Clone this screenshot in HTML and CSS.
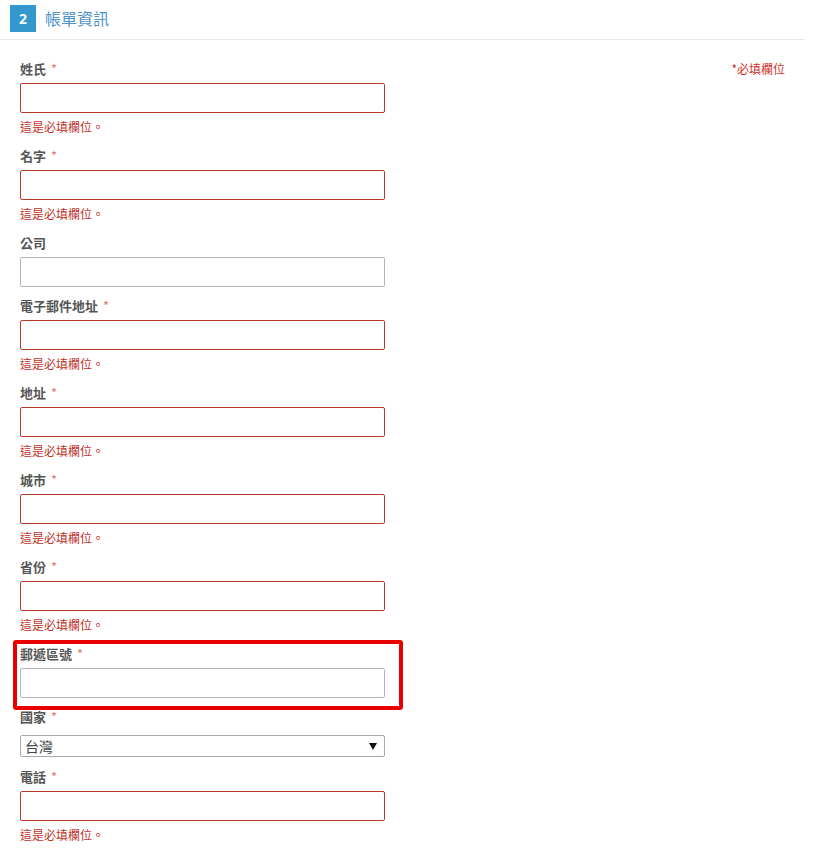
FILE: index.html
```html
<!DOCTYPE html>
<html lang="zh-Hant">
<head>
<meta charset="utf-8">
<title>帳單資訊</title>
<link rel="stylesheet" href="styles.css">
</head>
<body>
<div class="page">
  <div class="step-header">
    <span class="step-num">2</span>
    <h2 class="step-title">帳單資訊</h2>
  </div>
  <div class="form-body">
    <p class="required-note">*必填欄位</p>
    <div class="field">
      <label class="label">姓氏<em class="req">*</em></label>
      <input class="input invalid" type="text">
      <div class="error">這是必填欄位。</div>
    </div>
    <div class="field">
      <label class="label">名字<em class="req">*</em></label>
      <input class="input invalid" type="text">
      <div class="error">這是必填欄位。</div>
    </div>
    <div class="field">
      <label class="label">公司</label>
      <input class="input" type="text">
    </div>
    <div class="field">
      <label class="label">電子郵件地址<em class="req">*</em></label>
      <input class="input invalid" type="text">
      <div class="error">這是必填欄位。</div>
    </div>
    <div class="field">
      <label class="label">地址<em class="req">*</em></label>
      <input class="input invalid" type="text">
      <div class="error">這是必填欄位。</div>
    </div>
    <div class="field">
      <label class="label">城市<em class="req">*</em></label>
      <input class="input invalid" type="text">
      <div class="error">這是必填欄位。</div>
    </div>
    <div class="field">
      <label class="label">省份<em class="req">*</em></label>
      <input class="input invalid" type="text">
      <div class="error">這是必填欄位。</div>
    </div>
    <div class="field highlighted">
      <label class="label">郵遞區號<em class="req">*</em></label>
      <input class="input" type="text">
    </div>
    <div class="field country">
      <label class="label">國家<em class="req">*</em></label>
      <div class="select-wrap">
        <select class="select"><option>台灣</option></select>
      </div>
    </div>
    <div class="field">
      <label class="label">電話<em class="req">*</em></label>
      <input class="input invalid" type="text">
      <div class="error">這是必填欄位。</div>
    </div>
  </div>
</div>
</body>
</html>
```

FILE: styles.css
```css
* { box-sizing: border-box; }
html, body { margin: 0; padding: 0; background: #fff; }
body {
  font-family: "Noto Sans CJK TC", "Noto Sans", "Liberation Sans", sans-serif;
  color: #555;
}
.page { width: 805px; }
.step-header {
  display: flex;
  align-items: center;
  padding: 5px 0 7px 10px;
  border-bottom: 1px solid #e8e8e8;
}
.step-num {
  width: 26px;
  height: 27px;
  background: #3399cc;
  color: #fff;
  font-family: "Open Sans", "Liberation Sans", sans-serif;
  font-weight: 700;
  font-size: 14px;
  display: flex;
  align-items: center;
  justify-content: center;
}
.step-title {
  margin: 0 0 0 9px;
  font-size: 16px;
  font-weight: 400;
  color: #4f94c9;
  line-height: 27px;
}
.form-body {
  padding: 19px 0 0 20px;
}
.required-note {
  float: right;
  margin: 1px 20px 0 0;
  font-size: 12px;
  line-height: 18px;
  color: #d0301f;
}
.field {
  width: 365px;
  margin-bottom: 9px;
}
.label {
  display: block;
  font-size: 13px;
  font-weight: 700;
  line-height: 20px;
  color: #555;
}
.req {
  font-style: normal;
  font-weight: 400;
  color: #e07a70;
  margin-left: 5px;
}
.input {
  display: block;
  width: 365px;
  height: 30px;
  margin-top: 4px;
  border: 1px solid #b5b5b5;
  border-radius: 2px;
  background: #fff;
  padding: 0 6px;
  font: inherit;
}
.input.invalid { border-color: #b73a2b; }
.error {
  margin-top: 4px;
  font-size: 12px;
  line-height: 20px;
  color: #c0311f;
}
.highlighted { position: relative; }
.highlighted::before {
  content: "";
  position: absolute;
  top: -4px;
  left: -7px;
  right: -18px;
  bottom: -12px;
  border: 4px solid #e60000;
  border-radius: 3px;
  pointer-events: none;
}
.country { margin-top: 2px; margin-bottom: 10px; }
.select-wrap {
  position: relative;
  margin-top: 8px;
}
.select {
  display: block;
  width: 365px;
  height: 22px;
  -webkit-appearance: none;
  appearance: none;
  border: 1px solid #a9a9a9;
  border-radius: 2px;
  background: #fff;
  padding: 0 4px;
  font-family: "Noto Sans CJK TC", sans-serif;
  font-size: 14px;
  color: #444;
}
.select-wrap::after {
  content: "";
  position: absolute;
  right: 8px;
  top: 8px;
  width: 0;
  height: 0;
  border-left: 4px solid transparent;
  border-right: 4px solid transparent;
  border-top: 7px solid #111;
  pointer-events: none;
}
```
